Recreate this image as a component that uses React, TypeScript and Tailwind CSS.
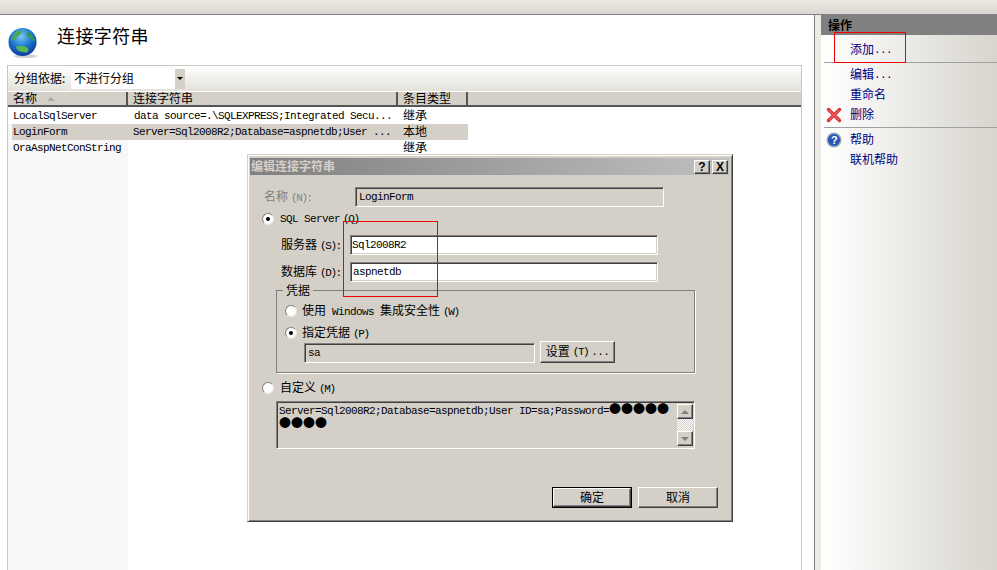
import React from "react";

const mono = "font-['Liberation_Mono','Noto_Sans_CJK_SC',monospace] text-[11px] tracking-[-0.6px] leading-4 text-black";
const sunken = "border border-t-[#808080] border-l-[#808080] border-r-white border-b-white shadow-[inset_1px_1px_0_#404040,inset_-1px_-1px_0_#d4d0c8]";
const raised = "border border-t-white border-l-white border-r-[#404040] border-b-[#404040] shadow-[inset_-1px_-1px_0_#808080] bg-[#d4d0c8]";

// CJK text runs at 12px, Latin stays at the 6px-wide cell
const Zh = ({ children, className = "" }: { children: React.ReactNode; className?: string }) => (
  <span className={"inline-block pb-[2px] font-['Noto_Sans_CJK_SC',sans-serif] text-[12px] leading-4 tracking-normal " + className}>{children}</span>
);

// mnemonic suffix such as (S): is set tighter than the rest
const Key = ({ children }: { children: React.ReactNode }) => (
  <span className="ml-[3px] tracking-[-1.4px]">{children}</span>
);

const Radio = ({ checked }: { checked?: boolean }) => (
  <span className="w-3 h-3 rounded-full bg-white shrink-0 flex items-center justify-center border border-t-[#808080] border-l-[#808080] border-r-[#e8e6e0] border-b-[#e8e6e0]">
    {checked && <span className="w-1 h-1 rounded-full bg-black" />}
  </span>
);

const Globe = () => (
  <svg width="31" height="32" viewBox="0 0 32 32">
    <defs>
      <radialGradient id="sea" cx="0.45" cy="0.3" r="0.75">
        <stop offset="0" stopColor="#7cc8f0" />
        <stop offset="0.5" stopColor="#1c78d0" />
        <stop offset="1" stopColor="#0a2f96" />
      </radialGradient>
    </defs>
    <ellipse cx="18" cy="29.5" rx="12" ry="2" fill="#d0d0d0" />
    <circle cx="15" cy="15" r="14.5" fill="url(#sea)" />
    <path d="M5 9 C7 5 10 3 13 3 C15 5 13 7 10 9 C8 12 6 13 3 14 C3 12 4 10 5 9Z" fill="#48a850" />
    <path d="M8 20 C12 18 19 19 21 22 C22 25 19 27 15 25 C12 25 9 23 8 20Z" fill="#58b84c" />
    <path d="M21 4 C24 6 27 10 28 14 C25 14 22 10 19 8 C19 6 20 5 21 4Z" fill="#2f9a58" />
  </svg>
);

const Redbox = ({ className }: { className: string }) => (
  <div className={"absolute border border-[#f00000] pointer-events-none " + className} />
);

const Action = ({ children, icon }: { children: React.ReactNode; icon?: React.ReactNode }) => (
  <div className="h-5 flex items-center relative pl-[29px] text-[#000080]">
    {icon && <span className="absolute left-[5px] top-[2px] w-4 h-4">{icon}</span>}
    {children}
  </div>
);

const Dialog = () => (
  <div className={"absolute left-[247px] top-[154px] w-[486px] h-[368px] flex flex-col pt-[3px] pl-[2px] pr-[3px] border border-t-[#d4d0c8] border-l-[#d4d0c8] border-r-[#404040] border-b-[#404040] bg-[#d4d0c8] shadow-[inset_1px_1px_0_white,inset_-1px_-1px_0_#808080] " + mono}>
    <div className="h-[17px] shrink-0 flex items-center justify-between pl-[1px] bg-gradient-to-r from-[#808080] to-[#c0c0c0]">
      <Zh className="font-bold text-[#d4d0c8]">编辑连接字符串</Zh>
      <div className="flex gap-[2px] pr-[1px]">
        <div className={"w-4 h-[14px] flex items-center justify-center font-bold text-[12px] font-['Liberation_Sans',sans-serif] tracking-normal " + raised}>?</div>
        <div className={"w-4 h-[14px] flex items-center justify-center font-bold text-[12px] font-['Liberation_Sans',sans-serif] tracking-normal " + raised}>X</div>
      </div>
    </div>

    <div className="flex items-center mt-[12px] ml-[14px] h-5">
      <span className="w-[91px] text-[#808080]"><Zh>名称</Zh><Key>(N):</Key></span>
      <div className={"w-[309px] h-5 pl-[3px] flex items-center " + sunken}>LoginForm</div>
    </div>

    <div className="flex items-center mt-[4px] ml-[12px] h-4 gap-[6px]">
      <Radio checked />
      <span>SQL Server<Key>(Q)</Key></span>
    </div>

    <div className="flex items-center mt-[8px] ml-[31px] h-5">
      <span className="w-[69px]"><Zh>服务器</Zh><Key>(S):</Key></span>
      <div className={"w-[308px] h-5 pl-[1px] flex items-center bg-white " + sunken}>Sql2008R2</div>
    </div>
    <div className="flex items-center mt-[7px] ml-[31px] h-5">
      <span className="w-[69px]"><Zh>数据库</Zh><Key>(D):</Key></span>
      <div className={"w-[308px] h-5 pl-[2px] flex items-center bg-white " + sunken}>aspnetdb</div>
    </div>

    <div className="relative mt-[8px] ml-[26px] w-[419px] h-[83px] border border-[#808080] shadow-[1px_1px_0_white] shrink-0">
      <span className="absolute left-[6px] -top-[9px] px-[3px] bg-[#d4d0c8] leading-4"><Zh>凭据</Zh></span>
      <div className="flex items-center mt-[12px] ml-[8px] h-4 gap-[5px]">
        <Radio />
        <span><Zh>使用</Zh> Windows <Zh>集成安全性</Zh><Key>(W)</Key></span>
      </div>
      <div className="flex items-center mt-[6px] ml-[8px] h-4 gap-[5px]">
        <Radio checked />
        <span><Zh>指定凭据</Zh><Key>(P)</Key></span>
      </div>
      <div className="flex items-center ml-[27px] gap-[5px]">
        <div className={"w-[231px] h-5 pl-[3px] flex items-center mt-[2px] " + sunken}>sa</div>
        <div className={"w-[75px] h-[22px] flex items-center justify-center " + raised}><Zh>设置</Zh><Key>(T)</Key><span className="ml-[3px]">...</span></div>
      </div>
    </div>

    <div className="flex items-center mt-[7px] ml-[12px] h-4 gap-[6px]">
      <Radio />
      <span><Zh>自定义</Zh><Key>(M)</Key></span>
    </div>

    <div className={"relative mt-[5px] ml-[26px] w-[419px] h-[48px] pl-[2px] pt-[1px] shrink-0 " + sunken}>
      <div className="leading-[12px]">Server=Sql2008R2;Database=aspnetdb;User ID=sa;Password=<span className="font-['Noto_Sans_CJK_SC',sans-serif] text-[12px] leading-[12px] tracking-normal">●●●●●</span></div>
      <div className="leading-[12px] font-['Noto_Sans_CJK_SC',sans-serif] text-[12px] tracking-normal">●●●●</div>
      <div className="absolute right-[1px] top-[2px] bottom-[2px] w-4 flex flex-col bg-[repeating-conic-gradient(#d4d0c8_0_25%,white_0_50%)] bg-[length:2px_2px]">
        <div className={"h-[15px] flex items-center justify-center " + raised}>
          <span className="w-0 h-0 border-x-[4px] border-x-transparent border-b-[4px] border-b-[#808080]" />
        </div>
        <div className="flex-1" />
        <div className={"h-[15px] flex items-center justify-center " + raised}>
          <span className="w-0 h-0 border-x-[4px] border-x-transparent border-t-[4px] border-t-[#808080]" />
        </div>
      </div>
    </div>

    <div className="flex justify-end gap-[6px] mt-[38px] mr-[11px]">
      <div className="w-20 h-[21px] border border-black">
        <div className={"w-full h-full flex items-center justify-center " + raised}><Zh>确定</Zh></div>
      </div>
      <div className={"w-20 h-[21px] flex items-center justify-center " + raised}><Zh>取消</Zh></div>
    </div>
  </div>
);

export default function App() {
  return (
    <div className={"relative w-[997px] h-[570px] overflow-hidden flex flex-col bg-white " + mono}>
      <div className="h-[15px] shrink-0 bg-gradient-to-b from-[#eceae5] to-[#d9d7cf] border-b border-[#808080]" />
      <div className="flex flex-1 min-h-0">
        {/* content pane */}
        <div className="w-[815px] shrink-0 border-r border-[#808080] flex flex-col pl-[7px] pr-3">
          <div className="h-[50px] shrink-0 flex items-start">
            <div className="mt-[12px] ml-[1px]"><Globe /></div>
            <h1 className="ml-[18px] mt-[8px] font-['Noto_Sans_CJK_SC',sans-serif] text-[18px] leading-6 tracking-[0.4px] font-normal">连接字符串</h1>
          </div>
          <div className="flex-1 flex flex-col border border-b-0 border-[#c8c6c0]">
            <div className="h-[25px] shrink-0 flex items-center pl-[6px] bg-gradient-to-b from-white to-[#e3e1db]">
              <Zh className="w-[52px]">分组依据:</Zh>
              <div className="ml-[5px] w-[114px] h-5 bg-white flex items-center justify-between pl-[3px]">
                <Zh>不进行分组</Zh>
                <div className="w-[10px] h-5 bg-[#d4d0c8] flex items-center justify-center">
                  <span className="w-0 h-0 border-x-[3px] border-x-transparent border-t-[3px] border-t-black" />
                </div>
              </div>
            </div>
            <div className="h-[16px] shrink-0 flex bg-[#d4d0c8] border-t border-white border-b-2 border-b-[#555]">
              <div className="w-[120px] pl-[5px] border-r-2 border-r-[#555] leading-[14px] flex items-center gap-[10px]">
                <Zh>名称</Zh>
                <span className="w-0 h-0 border-x-[4px] border-x-transparent border-b-[4px] border-b-[#aaa]" />
              </div>
              <div className="w-[270px] pl-[5px] border-r-2 border-r-[#555] flex items-center"><Zh>连接字符串</Zh></div>
              <div className="w-[70px] pl-[5px] border-r-2 border-r-[#555] flex items-center"><Zh>条目类型</Zh></div>
            </div>
            <div className="flex-1 flex flex-col pt-[1px] bg-[linear-gradient(to_right,#f7f7f7_120px,white_120px)]">
              <div className="flex h-4 items-center bg-white">
                <div className="w-[125px] pl-[5px] shrink-0">LocalSqlServer</div>
                <div className="w-[270px] pl-[1px] shrink-0 whitespace-nowrap">data source=.\SQLEXPRESS;Integrated Secu...</div>
                <Zh>继承</Zh>
              </div>
              <div className="flex h-4 items-center w-[456px] bg-[#d4d0c8] ml-[4px]">
                <div className="w-[121px] pl-[1px] shrink-0">LoginForm</div>
                <div className="w-[270px] shrink-0 whitespace-nowrap">Server=Sql2008R2;Database=aspnetdb;User ...</div>
                <Zh>本地</Zh>
              </div>
              <div className="flex h-4 items-center">
                <div className="w-[395px] pl-[5px] shrink-0">OraAspNetConString</div>
                <Zh>继承</Zh>
              </div>
            </div>
          </div>
        </div>

        {/* actions pane */}
        <div className="w-[6px] shrink-0 bg-[#ecebe6]" />
        <div className="flex-1 flex flex-col bg-gradient-to-r from-white to-[#d8d5ce]">
          <div className="h-5 shrink-0 bg-[#808080] flex items-center pl-[7px] pt-[2px]">
            <Zh className="font-bold">操作</Zh>
          </div>
          <div className="pt-[5px]">
            <Action>
              <Zh>添加</Zh><span>...</span>
            </Action>
            <div className="h-[1px] my-[2px] ml-[3px] bg-[#a0a0a0]" />
            <Action>
              <Zh>编辑</Zh><span>...</span>
            </Action>
            <Action><Zh>重命名</Zh></Action>
            <Action
              icon={
                <svg viewBox="0 0 16 16" width="16" height="16">
                  <path d="M2.5 2.5 L13.5 13.5 M13.5 2.5 L2.5 13.5" stroke="#d83030" strokeWidth="3.4" strokeLinecap="round" />
                  <path d="M3 3 L13 13 M13 3 L3 13" stroke="#f06060" strokeWidth="1.2" strokeLinecap="round" />
                </svg>
              }
            >
              <Zh>删除</Zh>
            </Action>
            <div className="h-[1px] my-[2px] ml-[3px] bg-[#a0a0a0]" />
            <Action
              icon={
                <svg viewBox="0 0 16 16" width="16" height="16">
                  <circle cx="8" cy="8" r="7.5" fill="#9aa5b5" />
                  <circle cx="8" cy="8" r="6" fill="#2456b8" />
                  <text x="8" y="12" textAnchor="middle" fontSize="11" fontWeight="700" fill="white" fontFamily="Liberation Sans">?</text>
                </svg>
              }
            >
              <Zh>帮助</Zh>
            </Action>
            <Action><Zh>联机帮助</Zh></Action>
          </div>
        </div>
      </div>

      <Dialog />
      <Redbox className="left-[343px] top-[221px] w-[95px] h-[76px]" />
      <Redbox className="left-[834px] top-[32px] w-[72px] h-[31px]" />
    </div>
  );
}
